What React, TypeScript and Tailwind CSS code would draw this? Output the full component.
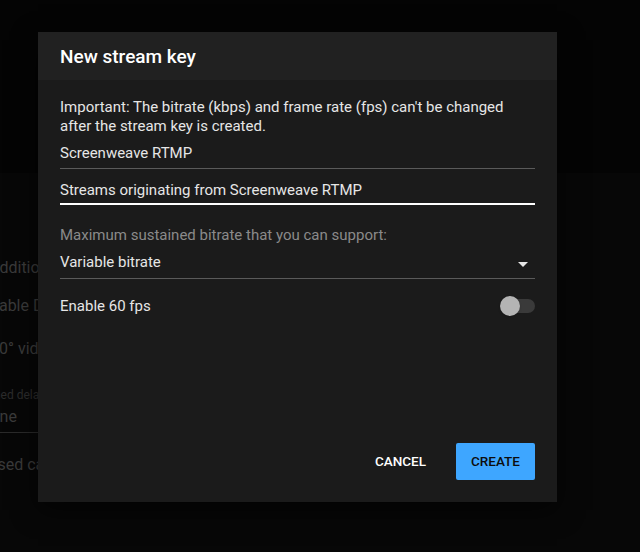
import { useState } from 'react'

export default function App() {
  const [name, setName] = useState('Screenweave RTMP')
  const [desc, setDesc] = useState('Streams originating from Screenweave RTMP')
  const [fps60, setFps60] = useState(false)

  return (
    <div
      className="relative w-[640px] h-[552px] overflow-hidden bg-[#070707] text-white"
      style={{ fontFamily: 'Roboto, "Noto Sans", sans-serif' }}
    >
      {/* Page behind the dialog */}
      <div className="h-[173px] bg-[#040404]" />
      <div className="flex flex-col text-[16px] text-[#3a3a3a]">
        <div className="mt-[85px] ml-[-11px] leading-5">Additional settings</div>
        <div className="mt-[18px] ml-[-19px] leading-5">Enable DVR</div>
        <div className="mt-[23px] ml-[-19px] leading-5">360° video</div>
        <div className="mt-[28px] ml-[-20px] text-[12px] leading-4 text-[#2c2c2c]">Timed delay</div>
        <div className="mt-[4px] ml-[-21px] leading-5">None</div>
        <div className="mt-[5px] w-[60px] border-t border-[#2a2a2a]" />
        <div className="mt-[22px] ml-[-26px] leading-5">Closed captions</div>
      </div>

      {/* Dialog */}
      <div className="absolute left-[38px] top-[32px] w-[519px] h-[470px] bg-[#1b1b1b] flex flex-col shadow-[0_8px_24px_rgba(0,0,0,0.6)]">
        <div className="h-[48px] bg-[#212121] flex items-center px-[22px] pt-[2px]">
          <h1 className="text-[19px] font-medium text-white">New stream key</h1>
        </div>

        <div className="flex-1 flex flex-col px-[22px] pt-[18px]">
          <p className="text-[15px] leading-[19px] text-[#e6e6e6]">
            Important: The bitrate (kbps) and frame rate (fps) can't be changed after the stream key is created.
          </p>

          <input
            value={name}
            onChange={(e) => setName(e.target.value)}
            className="mt-[1px] h-[32px] bg-transparent text-[15px] text-[#e6e6e6] border-b border-[#5a5a5a] outline-none"
          />
          <input
            value={desc}
            onChange={(e) => setDesc(e.target.value)}
            className="mt-[8px] h-[28px] bg-transparent text-[15px] text-[#e6e6e6] border-b-2 border-white outline-none"
          />

          <div className="mt-[19px] text-[15px] text-[#8a8a8a]">
            Maximum sustained bitrate that you can support:
          </div>
          <div className="mt-[6px] h-[26px] flex items-center justify-between border-b border-[#5a5a5a] cursor-pointer">
            <span className="text-[15px] text-[#e6e6e6] -mt-[6px]">Variable bitrate</span>
            <span className="mr-[7px] -mt-[2px] w-0 h-0 border-l-[5px] border-r-[5px] border-t-[5px] border-l-transparent border-r-transparent border-t-[#e6e6e6]" />
          </div>

          <div className="mt-[16px] flex items-center justify-between">
            <span className="text-[15px] text-[#e6e6e6]">Enable 60 fps</span>
            <button
              onClick={() => setFps60(!fps60)}
              className="relative w-[35px] h-[20px] flex items-center"
            >
              <span className="absolute right-0 w-[32px] h-[14px] rounded-full bg-[#3a3a3a]" />
              <span
                className={
                  fps60
                    ? 'absolute left-[15px] w-[20px] h-[20px] rounded-full bg-[#3ea6ff] shadow'
                    : 'absolute left-0 w-[20px] h-[20px] rounded-full bg-[#b4b4b4] shadow'
                }
              />
            </button>
          </div>

          <div className="mt-auto mb-[22px] flex items-center justify-end gap-[14px]">
            <button className="px-[16px] h-[37px] text-[13.5px] font-medium text-white">
              CANCEL
            </button>
            <button className="h-[37px] w-[79px] rounded-[2px] bg-[#3ea6ff] text-[13.5px] font-medium text-[#0d0d0d]">
              CREATE
            </button>
          </div>
        </div>
      </div>
    </div>
  )
}
